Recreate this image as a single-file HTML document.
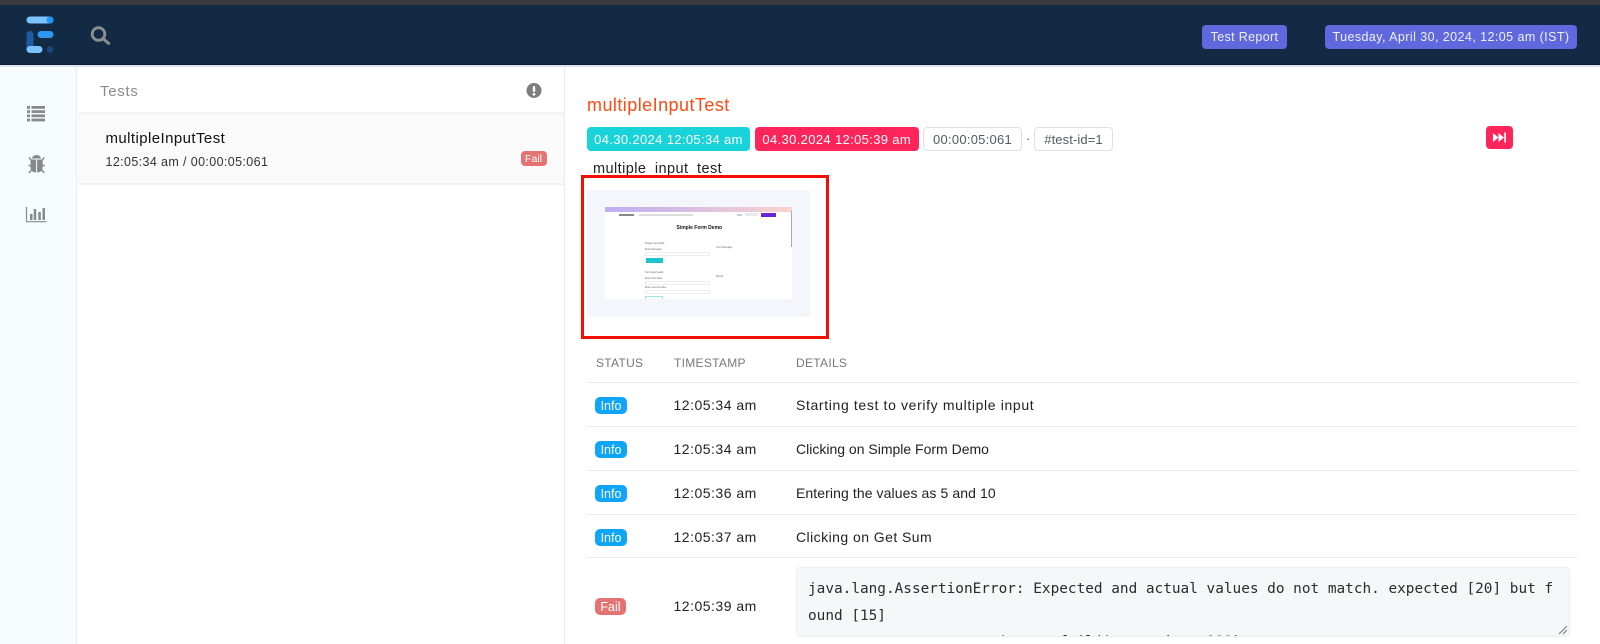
<!DOCTYPE html>
<html><head><meta charset="utf-8"><style>
*{box-sizing:border-box}
html,body{margin:0;padding:0;width:1600px;height:644px;overflow:hidden;background:#fff;font-family:"Liberation Sans",sans-serif;color:#1d1d1f}
.a{position:absolute}
.t{position:absolute;white-space:nowrap}
.badge{position:absolute;display:flex;align-items:center;justify-content:center;white-space:nowrap;border-radius:4px}
.line{position:absolute;left:587px;width:991px;height:1px;background:#e9ebed}
.th{position:absolute;top:355px;font-size:12px;line-height:16px;color:#777;letter-spacing:.3px;white-space:nowrap}
.time{position:absolute;left:673.500px;font-size:14px;line-height:18px;letter-spacing:.5px;color:#222;white-space:nowrap}
.det{position:absolute;left:796px;font-size:14px;line-height:18px;color:#222;white-space:nowrap}
.info{left:595px;width:32px;height:17px;background:#0ea5fb;color:#fff;font-size:12.500px;border-radius:5px}
.m{position:absolute;white-space:nowrap;font-size:2.500px;line-height:4px;color:#666}
</style></head><body>
<div class="a" style="left:0;top:0;width:1600px;height:5px;background:#3b3b3b"></div>
<div class="a" style="left:0;top:5px;width:1600px;height:60px;background:#132a45"></div>
<div class="a" style="left:0;top:64px;width:1600px;height:1px;background:#0b1c40"></div>
<div class="a" style="left:0;top:65px;width:1600px;height:2px;background:#dfe3e8"></div>

<svg class="a" style="left:0;top:0" width="130" height="64">
<rect x="26.500" y="16.500" width="27" height="7" rx="3.500" fill="#7cc2ff"/>
<circle cx="50" cy="20" r="3.500" fill="#2196f3"/>
<rect x="26.500" y="31" width="7" height="20" rx="3.500" fill="#1d5c9e"/>
<rect x="37.500" y="31" width="16" height="7" rx="3.500" fill="#2d98f2"/>
<rect x="26.500" y="46" width="16" height="7" rx="3.500" fill="#7cc2ff"/>
<circle cx="50" cy="49.500" r="3.300" fill="#17487e"/>
<circle cx="98.500" cy="34" r="6.300" fill="none" stroke="#8b8f92" stroke-width="2.800"/>
<path d="M103.200 38.800L108.600 43.400" stroke="#8b8f92" stroke-width="3" stroke-linecap="round"/>
</svg>

<div class="badge" style="left:1202px;top:25px;width:85px;height:24px;background:#5f68dd;color:#eef0ff;font-size:12.500px;letter-spacing:.35px">Test Report</div>
<div class="badge" style="left:1325px;top:25px;width:252px;height:24px;background:#5f68dd;color:#eef0ff;font-size:12.500px;letter-spacing:.43px">Tuesday, April 30, 2024, 12:05 am (IST)</div>

<div class="a" style="left:0;top:67px;width:77px;height:577px;background:#f7fcff;border-right:1px solid #e9edf0"></div>
<svg class="a" style="left:0;top:90px" width="77" height="145">
<g fill="#868a8c">
<rect x="27" y="16" width="3" height="2.800"/><rect x="31.500" y="16" width="13.500" height="2.800"/>
<rect x="27" y="20.200" width="3" height="2.800"/><rect x="31.500" y="20.200" width="13.500" height="2.800"/>
<rect x="27" y="24.400" width="3" height="2.800"/><rect x="31.500" y="24.400" width="13.500" height="2.800"/>
<rect x="27" y="28.600" width="3" height="2.800"/><rect x="31.500" y="28.600" width="13.500" height="2.800"/>
<path d="M32 68.500a4.500 3.500 0 0 1 9 0z"/>
<path d="M30.500 69.500h5.600v13c-3.300 0-5.600-2-5.600-5zM37.100 69.500h5.600v8c0 3-2.300 5-5.600 5z"/>
</g>
<g stroke="#868a8c" stroke-width="1.400" fill="none">
<path d="M29 67.500l2.500 3M44.300 67.500l-2.500 3M28.500 75.500h3M44.800 75.500h-3M29 83l2.500-3M44.300 83l-2.500-3"/>
<path d="M26.500 117v14.700h20" stroke-width="1.200"/>
</g>
<g fill="#868a8c">
<rect x="30" y="124" width="2.500" height="6"/><rect x="33.700" y="119" width="2.500" height="11"/><rect x="38.300" y="122" width="2.500" height="8"/><rect x="42.500" y="118" width="2.500" height="12"/>
</g>
</svg>

<div class="a" style="left:564px;top:67px;width:1px;height:577px;background:#e9ecef"></div>
<div class="t" style="left:100px;top:83px;font-size:15px;line-height:18px;color:#8c8c8c;letter-spacing:.7px">Tests</div>
<svg class="a" style="left:526px;top:83px" width="16" height="16">
<circle cx="8" cy="7.500" r="7.500" fill="#7e7e7e"/>
<rect x="6.800" y="3" width="2.400" height="6" rx="1" fill="#fff"/><circle cx="8" cy="11.300" r="1.400" fill="#fff"/>
</svg>
<div class="a" style="left:78px;top:112px;width:486px;height:73px;background:#fafafa;border-top:2px solid #f2f2f2;border-bottom:2px solid #f2f2f2"></div>
<div class="t" style="left:105.500px;top:130px;font-size:15px;line-height:18px;letter-spacing:.42px;color:#111">multipleInputTest</div>
<div class="t" style="left:105.500px;top:154px;font-size:12.500px;line-height:16px;letter-spacing:.38px;color:#333">12:05:34 am / 00:00:05:061</div>
<div class="badge" style="left:520.500px;top:151px;width:26px;height:15px;background:#e57373;color:#fff;font-size:10.500px">Fail</div>

<div class="t" style="left:587px;top:94px;font-size:18px;line-height:22px;color:#ff4a12;letter-spacing:.45px">multipleInputTest</div>
<div class="badge" style="left:587px;top:127px;width:163px;height:24px;background:#19d3da;color:#fff;font-size:13px;letter-spacing:.35px">04.30.2024 12:05:34 am</div>
<div class="badge" style="left:755px;top:127px;width:163.500px;height:24px;background:#ff2459;color:#fff;font-size:13px;letter-spacing:.35px">04.30.2024 12:05:39 am</div>
<div class="badge" style="left:923px;top:127px;width:99px;height:24px;background:#fff;border:1px solid #dfe1e4;color:#555a62;font-size:13px;letter-spacing:.25px">00:00:05:061</div>
<div class="t" style="left:1026px;top:130px;font-size:13px;line-height:18px;color:#555">·</div>
<div class="badge" style="left:1034px;top:127px;width:79px;height:24px;background:#fff;border:1px solid #dfe1e4;color:#555a62;font-size:13px;letter-spacing:.1px">#test-id=1</div>
<div class="badge" style="left:1486px;top:126px;width:27px;height:23px;background:#ff2459;border-radius:4px">
<svg width="15" height="11"><path d="M1 1l5.500 4.500L1 10zM6.500 1l5.500 4.500L6.500 10z" fill="#fff"/><rect x="12.300" y="0.500" width="1.700" height="10" fill="#fff"/></svg></div>
<div class="t" style="left:593px;top:160px;font-size:14.500px;line-height:18px;letter-spacing:.43px;color:#222">multiple_input_test</div>

<div class="a" style="left:581px;top:175px;width:248px;height:163.500px;border:3px solid #f40f05"></div>
<div class="a" style="left:587px;top:190px;width:223px;height:127px;background:#f5f6fb"></div>
<div class="a" style="left:605px;top:207px;width:187px;height:92px;background:#fff"></div>
<div class="a" style="left:0;top:0;width:1600px;height:644px;filter:blur(.35px)">
<div class="a" style="left:605px;top:207px;width:187px;height:4.500px;background:linear-gradient(90deg,#bdaef2,#fbd2cd)"></div>
<div class="a" style="left:790.500px;top:211px;width:1.500px;height:36px;background:#aaa"></div>
<div class="t" style="left:676.500px;top:224.500px;font-size:5px;line-height:7px;font-weight:bold;color:#111">Simple Form Demo</div>
<div class="m" style="left:645px;top:242px">Single Input Field</div>
<div class="m" style="left:645px;top:248px">Enter Message</div>
<div class="a" style="left:645px;top:252px;width:65px;height:4px;border:.5px solid #eee"></div>
<div class="a" style="left:646px;top:258px;width:17px;height:4.500px;background:#1ec4cc"></div>
<div class="m" style="left:716px;top:246px">Your Message:</div>
<div class="m" style="left:645px;top:271px">Two Input Fields</div>
<div class="m" style="left:645px;top:277px">Enter first value</div>
<div class="a" style="left:645px;top:280.500px;width:65px;height:4px;border:.5px solid #eee"></div>
<div class="m" style="left:645px;top:286px">Enter second value</div>
<div class="a" style="left:645px;top:290px;width:65px;height:4px;border:.5px solid #eee"></div>
<div class="a" style="left:645px;top:295.500px;width:18px;height:3.500px;border:.5px solid #9fe3e6;border-bottom:0"></div>
<div class="m" style="left:716px;top:275px">Result</div>
<div class="a" style="left:619px;top:213.500px;width:15px;height:2px;background:#888"></div>
<div class="a" style="left:639px;top:213.500px;width:54px;height:2px;background:#ddd"></div>
<div class="a" style="left:737px;top:213.500px;width:5px;height:2px;background:#ccc"></div>
<div class="a" style="left:745px;top:213px;width:13px;height:3px;background:#e8e8f0"></div>
<div class="a" style="left:761px;top:212.500px;width:15px;height:4px;background:#6a25d8"></div>
</div>

<div class="th" style="left:596px">STATUS</div>
<div class="th" style="left:674px">TIMESTAMP</div>
<div class="th" style="left:796px">DETAILS</div>
<div class="line" style="top:382px"></div>
<div class="line" style="top:426px"></div>
<div class="line" style="top:470px"></div>
<div class="line" style="top:514px"></div>
<div class="line" style="top:557px"></div>

<div class="badge info" style="top:397px">Info</div>
<div class="time" style="top:396px">12:05:34 am</div>
<div class="det" style="top:396px;letter-spacing:.64px">Starting test to verify multiple input</div>
<div class="badge info" style="top:441px">Info</div>
<div class="time" style="top:440px">12:05:34 am</div>
<div class="det" style="top:440px;letter-spacing:0">Clicking on Simple Form Demo</div>
<div class="badge info" style="top:485px">Info</div>
<div class="time" style="top:484px">12:05:36 am</div>
<div class="det" style="top:484px;letter-spacing:.09px">Entering the values as 5 and 10</div>
<div class="badge info" style="top:529px">Info</div>
<div class="time" style="top:528px">12:05:37 am</div>
<div class="det" style="top:528px;letter-spacing:.45px">Clicking on Get Sum</div>

<div class="badge" style="left:595px;top:598px;width:31px;height:17px;background:#e57373;color:#fff;font-size:12.500px;border-radius:5px">Fail</div>
<div class="time" style="top:597px">12:05:39 am</div>
<div class="a" style="left:796px;top:567px;width:774px;height:70px;background:#f6f7f9;border:1px solid #eceef0;border-radius:4px;overflow:hidden">
<div style="position:absolute;left:11px;top:8px;width:760px;font-family:'DejaVu Sans Mono','Liberation Mono',monospace;font-size:14.400px;line-height:26.500px;color:#2b2b2b;white-space:pre">java.lang.AssertionError: Expected and actual values do not match. expected [20] but f
ound [15]
        at org.testng.Assert.fail(Assert.java:111)</div>
<svg style="position:absolute;right:1px;bottom:1px" width="10" height="10"><path d="M1 9L9 1M5 9L9 5" stroke="#777" stroke-width="1"/></svg>
</div>
</body></html>
